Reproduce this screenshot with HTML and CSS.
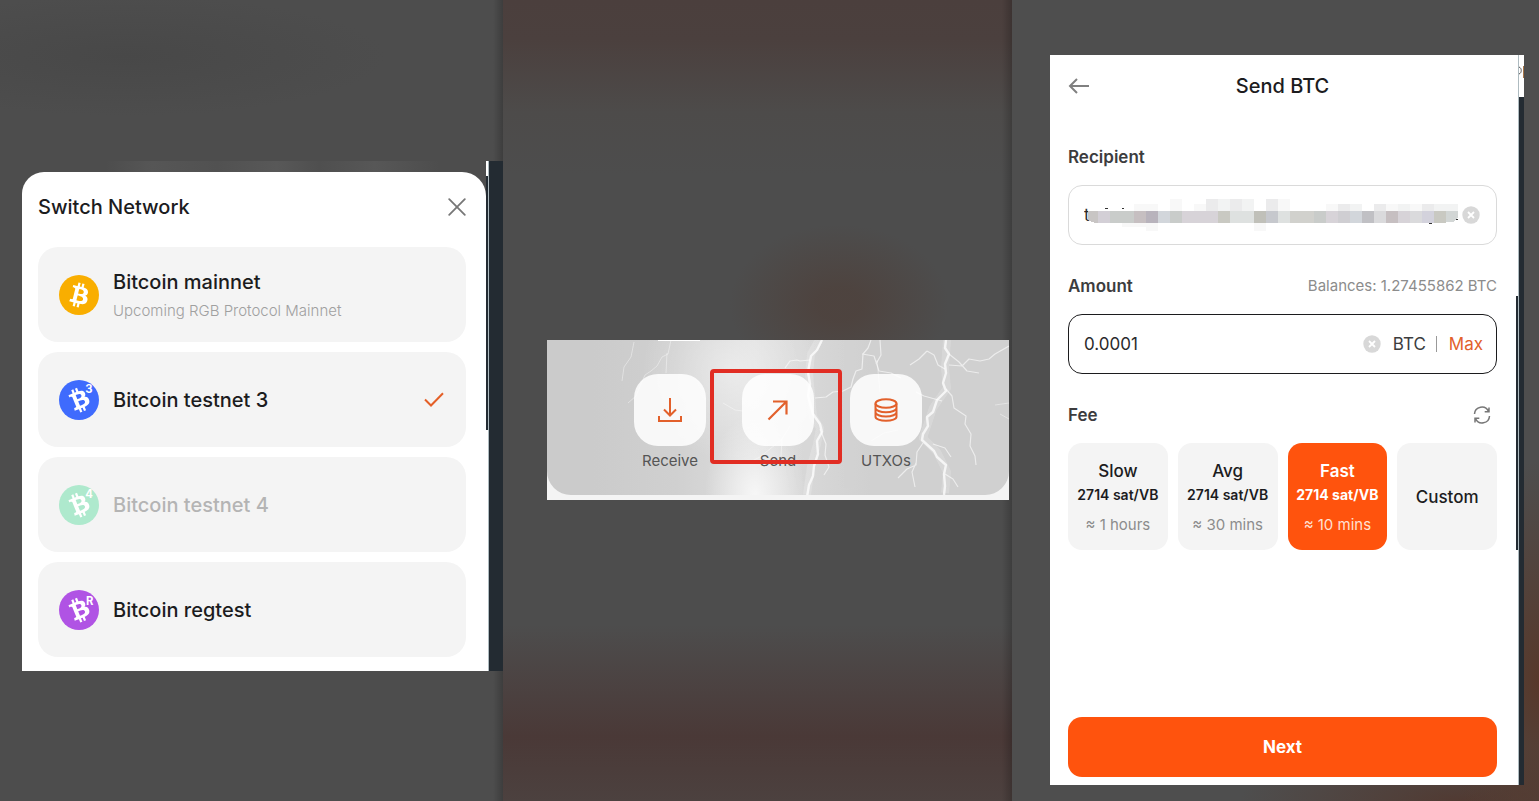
FILE: index.html
```html
<!DOCTYPE html>
<html lang="en">
<head>
<meta charset="utf-8">
<meta name="viewport" content="width=device-width, initial-scale=1">
<title>Send BTC</title>
<link rel="stylesheet" href="styles.css">
</head>
<body>
<svg class="defs" width="0" height="0" aria-hidden="true">
  <defs>
    <path id="coin" d="M23.189 14.02c.314-2.096-1.283-3.223-3.465-3.975l.708-2.84-1.728-.43-.69 2.765c-.454-.114-.92-.22-1.385-.326l.695-2.783L15.596 6l-.708 2.839c-.376-.086-.746-.17-1.104-.26l.002-.009-2.384-.595-.46 1.846s1.283.294 1.256.312c.7.175.826.638.805 1.006l-.806 3.235c.048.012.11.03.18.057l-.183-.045-1.13 4.532c-.086.212-.303.531-.793.41.018.025-1.256-.313-1.256-.313l-.858 1.978 2.25.561c.418.105.828.215 1.231.318l-.715 2.872 1.727.43.708-2.84c.472.127.93.245 1.378.357l-.706 2.828 1.728.43.715-2.866c2.948.558 5.164.333 6.097-2.333.752-2.146-.037-3.385-1.588-4.192 1.13-.26 1.98-1.003 2.207-2.538zm-3.95 5.538c-.533 2.147-4.148.986-5.32.695l.95-3.805c1.172.293 4.929.872 4.37 3.11zm.535-5.569c-.487 1.953-3.495.96-4.47.717l.86-3.45c.975.243 4.118.696 3.61 2.733z"/>
  </defs>
</svg>
<main class="board">
  <section class="stage stage-network">
    <div class="shot shot-network">
      <div class="sheet-wrap">
        <div class="sheet-top"></div>
        <div class="sheet">
          <header class="sheet-head">
            <h2 class="title">Switch Network</h2>
            <button class="icon-btn" type="button" aria-label="Close">
              <svg width="18" height="18" viewBox="0 0 18 18" fill="none" stroke="#777" stroke-width="1.8" stroke-linecap="round"><path d="M1.2 1.2l15.6 15.6M16.8 1.2L1.2 16.8"/></svg>
            </button>
          </header>
          <div class="networks">
            <button class="network" type="button">
              <svg class="coin" viewBox="0 0 32 32"><circle cx="16" cy="16" r="16" fill="#f9ae00"/><use href="#coin" fill="#fff"/></svg>
              <span class="network-text"><span class="title">Bitcoin mainnet</span><span class="network-note">Upcoming RGB Protocol Mainnet</span></span>
            </button>
            <button class="network" type="button">
              <svg class="coin" viewBox="0 0 32 32"><circle cx="16" cy="16" r="16" fill="#3f6bfd"/><use href="#coin" fill="#fff" transform="rotate(-36 16 16)"/><text class="coin-tag" x="21" y="10.5">3</text></svg>
              <span class="title">Bitcoin testnet 3</span>
              <svg class="tick" width="20" height="16" viewBox="0 0 20 16" fill="none" stroke="#e45f27" stroke-width="2"><path d="M1 7.500l6 6L19 1.200"/></svg>
            </button>
            <button class="network" type="button" disabled>
              <svg class="coin" viewBox="0 0 32 32"><circle cx="16" cy="16" r="16" fill="#aee9cd"/><use href="#coin" fill="#fff" transform="rotate(-36 16 16)"/><text class="coin-tag" x="21" y="10.500">4</text></svg>
              <span class="title">Bitcoin testnet 4</span>
            </button>
            <button class="network" type="button">
              <svg class="coin" viewBox="0 0 32 32"><circle cx="16" cy="16" r="16" fill="#b053e4"/><use href="#coin" fill="#fff" transform="rotate(-36 16 16)"/><text class="coin-tag" x="21.500" y="12">R</text></svg>
              <span class="title">Bitcoin regtest</span>
            </button>
          </div>
        </div>
      </div>
      <div class="scroll"></div>
      <div class="edge"></div>
    </div>
  </section>

  <section class="stage stage-actions">
    <div class="shot-actions">
      <div class="hero">
        <svg class="storm" viewBox="0 0 462 155" preserveAspectRatio="none" fill="none" stroke="#fff" stroke-linejoin="round" aria-hidden="true">
          <path d="M111 0h42" stroke-width="2"/>
          <g opacity=".4">
            <path d="M87 2l-3 15-7 10-2 14M124 0l-3 14-6 3-5 9-6 5-6 4-4 9-5 12-8 7M120 13l-1 20M176 63l12 7 8 1M243 86l-8 13-12 10-10 8-10 5M235 99l-1 17M330 20l3 32M448 65l14-2M453 74l9 5M351 90l-14 3-13 8"/>
          </g>
          <g stroke-width="8" opacity=".18"><path d="M272 0l-8 14-2 20 4 42 7 12-3 16-6 22-4 29M400 0l-2 28 2 20-14 20-10 30 14 14 10 20-2 21"/></g>
          <g stroke-width="2.400" opacity=".75">
            <path d="M275 0l-5 10-6 6-3 16 2 12-2 12 5 18 7 10 2 8-5 9 1 13-4 12-1 10-4 9-2 12 1 8"/>
            <path d="M399 0l-1 8 4 6-4 10 1 9-3 10 3 8-9 9-4 12-6 5 1 9-5 8-1 6 12 11 3 6 9 8-2 9 1 12-1 9"/>
          </g>
          <g stroke-width="1.200" opacity=".6">
            <path d="M324 0l-3 8-5 6-1 15-6 2-3 8-2 8-8 4-10 1-7 5-11 1"/>
            <path d="M315 14l12 2 5 15 12 2 10 5M333 0l1 15-5 9M263 20l-10 1-3-1-7 1-5 7"/>
            <path d="M402 14l10 8 8 9 12 2M462 6l-14 8-6 5-9 2-11-2-7 7-13-1M380 11l7 4 4 10 7 4M380 11l-8 8-9 6"/>
            <path d="M399 49l6 7 2 12 12 8-1 8 6 10-1 12 5 10 1 9M376 103l-6 9-1 13-9 4-9 9M369 123l-4 9 3 15M398 134l8 5 5 8M386 104l12 4 6 9M273 89l6 15-1 11 4 12-5 8M395 61l-18-5-8-4"/>
          </g>
        </svg>
        <nav class="actions">
          <button class="action" type="button"><span class="tile"><svg width="24" height="24" viewBox="0 0 24 24" fill="none" stroke="#e2602b" stroke-width="2"><path d="M12 0v17M6 11.500l6 6 6-6M1 18v5h22v-5"/></svg></span><span class="action-label">Receive</span></button>
          <button class="action" type="button"><span class="tile"><svg width="24" height="24" viewBox="0 0 24 24" fill="none" stroke="#e2602b" stroke-width="2.200"><path d="M2.500 21.500L20 4M7 3.500h13.500v13"/></svg></span><span class="action-label">Send</span><span class="marker"></span></button>
          <button class="action" type="button"><span class="tile"><svg width="24" height="24" viewBox="0 0 24 24" fill="none" stroke="#e2602b" stroke-width="2"><ellipse cx="12" cy="5.500" rx="10.500" ry="4.300"/><path d="M1.500 5.500v13.300c0 2.300 4.700 4 10.500 4s10.500-1.700 10.500-4V5.500M1.500 10c0 2.300 4.700 4.200 10.500 4.200s10.500-1.900 10.500-4.200M1.500 14.300c0 2.300 4.700 4.200 10.500 4.200s10.500-1.900 10.500-4.200"/></svg></span><span class="action-label">UTXOs</span></button>
        </nav>
      </div>
    </div>
  </section>

  <section class="stage stage-send">
    <div class="shot shot-send">
      <form class="send">
        <header class="send-head">
          <button class="icon-btn" type="button" aria-label="Back"><svg width="22" height="16" viewBox="0 0 22 16" fill="none" stroke="#808080" stroke-width="2"><path d="M21 8H2M9 1L2 8l7 7"/></svg></button>
          <h2 class="title">Send BTC</h2>
        </header>
        <div class="field">
          <div class="field-head"><label class="label" for="recipient">Recipient</label></div>
          <div class="box">
            <input class="input" id="recipient" type="text" value="t" readonly>
            <svg class="mask" width="372" height="36" viewBox="0 0 372 36" shape-rendering="crispEdges" aria-hidden="true">
              <path fill="#333" d="M19 9h3v1h-3zM36 9h2v1h-2z"/>
              <path fill="#f8f8f8" d="M48 5h24v7H48zM84 0h12v12H84zM108 5h12v7h-12zM192 0h12v12h-12zM240 5h12v7h-12zM300 5h12v7h-12zM324 5h12v7h-12zM36 24h24v4H36zM60 24h12v8H60zM168 24h12v8h-12z"/>
              <path fill="#ebebec" d="M120 0h12v12h-12zM144 0h12v12h-12zM180 0h12v12h-12zM252 5h12v7h-12zM288 5h12v7h-12zM336 5h12v7h-12z"/>
              <path fill="#f2f3f3" d="M132 0h12v12h-12zM156 0h12v12h-12zM264 5h12v7h-12zM312 5h12v7h-12zM348 5h24v7h-24z"/>
              <g>
                <path fill="#c8c5c4" d="M2 12h10v12H9l-7-3z"/><path fill="#d3cfd6" d="M12 12h12v12H12z"/><path fill="#c9ccca" d="M24 12h24v12H24zM84 12h12v12H84zM228 12h12v12h-12z"/><path fill="#c6bfc1" d="M48 12h12v12H48zM300 12h12v12h-12z"/><path fill="#b8b3bc" d="M60 12h12v12H60z"/><path fill="#d2d6db" d="M72 12h12v12H72zM264 12h12v12h-12z"/><path fill="#d7d3d8" d="M96 12h36v12H96zM240 12h12v12h-12zM312 12h12v12h-12z"/><path fill="#c9c9c2" d="M132 12h12v12h-12zM348 12h12v12h-12z"/><path fill="#dee1e0" d="M144 12h24v12h-24zM192 12h12v12h-12z"/><path fill="#c0c0b9" d="M168 12h12v12h-12z"/><path fill="#c6c8cd" d="M180 12h12v12h-12z"/><path fill="#d1d1cd" d="M204 12h24v12h-24z"/><path fill="#cfced2" d="M252 12h12v12h-12z"/><path fill="#c0c0c4" d="M276 12h12v12h-12z"/><path fill="#dadadc" d="M288 12h12v12h-12zM324 12h12v12h-12z"/><path fill="#d3d2dc" d="M336 12h12v12h-12z"/><path fill="#d2d6d5" d="M360 12h12v7l-5 4h-7z"/>
              </g>
              <path fill="#333" d="M343 24h3v1h-3zM370 20h2v1h-2z"/>
            </svg>
            <button class="icon-btn" type="button" aria-label="Clear recipient"><svg width="18" height="18" viewBox="0 0 18 18"><circle cx="9" cy="9" r="8.700" fill="#d8d8d8"/><path d="M6 6l6 6M12 6l-6 6" stroke="#fff" stroke-width="1.800"/></svg></button>
          </div>
        </div>
        <div class="field">
          <div class="field-head"><label class="label" for="amount">Amount</label><span class="balance">Balances: 1.27455862 BTC</span></div>
          <div class="box box-active">
            <input class="input" id="amount" type="text" value="0.0001">
            <button class="icon-btn" type="button" aria-label="Clear amount"><svg width="18" height="18" viewBox="0 0 18 18"><circle cx="9" cy="9" r="8.700" fill="#d8d8d8"/><path d="M6 6l6 6M12 6l-6 6" stroke="#fff" stroke-width="1.800"/></svg></button>
            <span class="unit">BTC</span><span class="bar"></span><button class="max" type="button">Max</button>
          </div>
        </div>
        <div class="field">
          <div class="field-head"><span class="label">Fee</span>
            <button class="icon-btn refresh" type="button" aria-label="Refresh fees"><svg width="18" height="18" viewBox="0 0 18 18" fill="none" stroke="#777" stroke-width="1.500"><path d="M1.500 8A7.300 7.300 0 0 1 15.500 5.500M16.500 10A7.300 7.300 0 0 1 2.500 12.500M16 1.500v4.300h-4.300M2 16.500v-4.300h4.300"/></svg></button>
          </div>
          <div class="fees">
            <button class="fee" type="button"><span class="fee-name">Slow</span><span class="fee-rate">2714 sat/VB</span><span class="fee-time">≈ 1 hours</span></button>
            <button class="fee" type="button"><span class="fee-name">Avg</span><span class="fee-rate">2714 sat/VB</span><span class="fee-time">≈ 30 mins</span></button>
            <button class="fee fee-on" type="button"><span class="fee-name">Fast</span><span class="fee-rate">2714 sat/VB</span><span class="fee-time">≈ 10 mins</span></button>
            <button class="fee" type="button"><span class="fee-name">Custom</span></button>
          </div>
        </div>
        <button class="next" type="button">Next</button>
      </form>
      <div class="scroll"></div>
      <div class="edge"><span class="edge-page"><svg width="5" height="42" viewBox="0 0 5 42" fill="none" aria-hidden="true"><path d="M0 12c3 1 3 6 0 7" stroke="#555"/><path d="M4.500 11v12" stroke="#a8764a"/></svg></span></div>
    </div>
  </section>
</main>
</body>
</html>
```
FILE: styles.css
```css
* { box-sizing: border-box; }
body {
  margin: 0;
  background: #4d4d4d;
  color: #1c1c1e;
  font-family: Inter, "Liberation Sans", sans-serif;
}
button {
  padding: 0;
  border: 0;
  background: none;
  color: inherit;
  font: inherit;
}
svg { display: block; flex: none; }
.defs { position: absolute; }

.board {
  display: grid;
  grid-template-columns: 503fr 509fr 527fr;
  min-height: 100vh;
}
.stage { min-width: 0; }
.stage-network {
  padding: 161px 0 130px 22px;
  background:
    linear-gradient(90deg, transparent 98%, rgba(0, 0, 0, .2)),
    radial-gradient(ellipse 260px 60px at 25% 7%, #484848, transparent),
    #4d4d4d;
}
.stage-actions {
  display: flex;
  align-items: flex-start;
  padding: 340px 3px 0 44px;
  background:
    linear-gradient(90deg, transparent 98%, rgba(0, 0, 0, .2)),
    radial-gradient(ellipse 110px 80px at 66% 38%, rgba(78, 61, 54, .6) 20%, rgba(78, 61, 54, 0)),
    linear-gradient(#4b3f3d 0, #4b403e 5%, #4d4b4a 14%, #4d4d4d 22%, #4d4d4d 78%, #4b403f 87%, #4a3937 92%, #4c413f);
}
.stage-send {
  display: flex;
  padding: 55px 15px 16px 38px;
  background:
    radial-gradient(ellipse 90px 220px at 100% 85%, #57382a, transparent),
    radial-gradient(ellipse 220px 60px at 85% 100%, #513a32, transparent),
    #4e4e4e;
}

.title {
  margin: 0;
  font-size: 20px;
  line-height: 28px;
  font-weight: 500;
}
.icon-btn { display: flex; flex: none; }

.shot { display: grid; grid-template-columns: 1fr 3px 14px; width: 100%; }
.sheet-top {
  height: 11px;
  background: linear-gradient(90deg, #4d4d4d 18%, #565656 28%, #515151 42%, #585858 55%, #4f4f4f 64%, #575757 76%, #4d4d4d 90%);
}
.sheet-wrap { background: #4d4d4d; }
.sheet {
  padding: 0 20px 14px 16px;
  background: #fff;
  border-radius: 22px 24px 0 0;
}
.sheet-head {
  display: flex;
  align-items: center;
  justify-content: space-between;
  height: 70px;
  margin-bottom: 5px;
}
.networks { display: grid; gap: 10px; }
.network {
  display: flex;
  align-items: center;
  gap: 14px;
  height: 95px;
  padding: 0 22px 0 21px;
  background: #f4f4f4;
  border-radius: 20px;
  text-align: left;
}
.network:disabled { color: #b4b4b4; }
.network-text { display: grid; gap: 5px; }
.network-note {
  color: #a0a0a0;
  font-size: 15px;
  line-height: 20px;
  font-weight: 300;
}
.coin { width: 40px; height: 40px; }
.coin-tag { fill: #fff; font-size: 9px; font-weight: 700; }
.tick { margin-left: auto; }

.scroll {
  border-right: 1px solid #aebbc0;
  background: linear-gradient(#fff 15px, #232b32 15px, #232b32 269px, #fff 269px);
}
.edge { background: #232b32; }

.shot-actions { width: 100%; padding-bottom: 5px; background: #f4f4f4; }
.hero {
  position: relative;
  overflow: hidden;
  padding: 34px 0 24px;
  border-radius: 0 0 24px 24px;
  background:
    radial-gradient(ellipse 90px 90px at 40% 20%, rgba(255, 255, 255, .45), rgba(255, 255, 255, 0)),
    radial-gradient(ellipse 50px 80px at 45% 100%, rgba(255, 255, 255, .75), rgba(255, 255, 255, 0)),
    linear-gradient(90deg, #cbcbcb 10%, #d0d0d0 28%, #dedede 45%, #d0d0d0 70%, #d0d0d0);
}
.storm { position: absolute; inset: 0; width: 100%; height: 100%; }
.actions {
  position: relative;
  display: flex;
  justify-content: center;
  gap: 36px;
}
.action { position: relative; display: grid; gap: 5px; width: 72px; }
.tile {
  display: grid;
  place-items: center;
  height: 72px;
  border-radius: 24px;
  background: rgba(255, 255, 255, .85);
}
.action-label { color: #555; font-size: 15px; line-height: 20px; }
.marker {
  position: absolute;
  top: -5px;
  left: -32px;
  width: 132px;
  height: 95px;
  border: 4px solid #e12d23;
  border-radius: 4px;
}

.shot-send { grid-template-columns: 1fr 3px 5px; }
.send {
  display: flex;
  flex-direction: column;
  gap: 28px;
  padding: 0 19px 8px 18px;
  background: #fff;
}
.shot-send .scroll {
  background: linear-gradient(#fff 241px, #232b32 241px, #232b32 495px, #fff 495px);
}
.edge-page { display: block; height: 42px; background: #fff; }
.send-head {
  display: grid;
  grid-template-columns: 22px 1fr 22px;
  align-items: center;
  height: 61px;
}
.send-head .title { text-align: center; }
.field { display: grid; gap: 15px; }
.field-head {
  display: flex;
  align-items: center;
  justify-content: space-between;
  height: 26px;
}
.label { color: #3c3c3e; font-size: 17px; line-height: 24px; font-weight: 600; }
.balance { color: #8c8c8c; font-size: 15px; line-height: 20px; }
.refresh { padding-right: 6px; }
.box {
  position: relative;
  display: flex;
  align-items: center;
  height: 60px;
  padding: 0 16px 0 15px;
  border: 1px solid #dadada;
  border-radius: 14px;
}
.box-active { padding-right: 13px; border-color: #1c1c1e; }
.input {
  flex: 1;
  min-width: 0;
  padding: 0;
  border: 0;
  outline: 0;
  background: none;
  color: #2a2a2c;
  font: 400 17px/24px Inter, "Liberation Sans", sans-serif;
}
.mask { position: absolute; top: 13px; left: 17px; }
.unit { margin-left: 12px; color: #3c3c3e; font-size: 17px; }
.bar { width: 1px; height: 16px; margin: 0 12px 0 10px; background: #999; }
.max { color: #e2602b; font-size: 17px; }
.fees { display: grid; grid-template-columns: repeat(4, 1fr); gap: 10px; }
.fee {
  display: flex;
  flex-direction: column;
  align-items: center;
  justify-content: center;
  height: 107px;
  border-radius: 14px;
  background: #f4f4f4;
  white-space: nowrap;
}
.fee-name { font-size: 17px; line-height: 24px; font-weight: 500; }
.fee-rate { font-size: 14px; line-height: 24px; font-weight: 600; }
.fee-time { margin-top: 8px; color: #8c8c8c; font-size: 15px; line-height: 20px; }
.fee-on { background: #ff530d; color: #fff; }
.fee-on .fee-name { font-weight: 600; }
.fee-on .fee-rate { font-weight: 700; }
.fee-on .fee-time { color: #ffe0d2; }
.next {
  height: 60px;
  margin-top: auto;
  border-radius: 14px;
  background: #ff530d;
  color: #fff;
  font-size: 17px;
  font-weight: 700;
}
```
